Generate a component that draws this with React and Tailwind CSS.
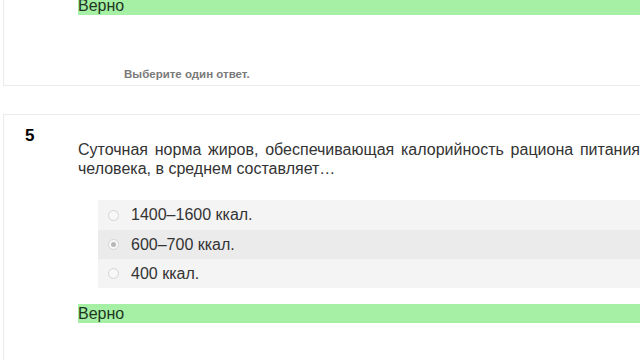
import React from 'react';

const options = [
  { text: '1400–1600 ккал.', checked: false },
  { text: '600–700 ккал.', checked: true },
  { text: '400 ккал.', checked: false },
];

const Radio = ({ checked }) => (
  <span className="w-[11px] h-[11px] rounded-full border border-[#d4d4d4] bg-[#f8f8f8] flex items-center justify-center">
    {checked && <span className="w-[5px] h-[5px] rounded-full bg-[#b8b8b8]" />}
  </span>
);

const App = () => {
  return (
    <div
      className="w-[640px] h-[360px] overflow-hidden bg-white pl-[3px] text-[#333]"
      style={{ fontFamily: '"Liberation Sans", Arial, sans-serif' }}
    >
      {/* Previous question (tail) */}
      <div className="w-[700px] h-[89px] -mt-[3px] border-l border-b border-[#ebebeb] flex flex-col">
        <div className="ml-[74px] h-[18px] bg-[#a5f0a5] text-[16px] leading-[17px] text-[#1e361e]">Верно</div>
        <div className="ml-[120px] mt-[53px] text-[11.5px] font-bold text-[#7a7a7a] leading-[13px]">
          Выберите один ответ.
        </div>
      </div>

      {/* Question 5 */}
      <div className="w-[700px] h-[260px] mt-[28px] border-l border-t border-[#ebebeb] flex">
        <div className="w-[74px] pl-[21px] pt-[11px] text-[17px] font-bold text-black leading-[20px]">5</div>
        <div className="flex-1 flex flex-col pt-[25px]">
          <div className="w-[562px] text-[16px] leading-[19px] text-[#333]">
            <div className="text-justify [text-align-last:justify]">
              Суточная норма жиров, обеспечивающая калорийность рациона питания
            </div>
            <div>человека, в среднем составляет…</div>
          </div>

          <div className="ml-[20px] mt-[22px] flex flex-col">
            {options.map((o, i) => (
              <div
                key={i}
                className={`flex items-center pl-[10px] ${i === 0 ? 'h-[30px]' : 'h-[29px]'} ${
                  o.checked ? 'bg-[#ebebeb]' : 'bg-[#f4f4f4]'
                }`}
              >
                <Radio checked={o.checked} />
                <span className="ml-[12px] text-[16px] text-[#333]">{o.text}</span>
              </div>
            ))}
          </div>

          <div className="mt-[16px] h-[19px] bg-[#a5f0a5] text-[16px] leading-[19px] text-[#1e361e]">Верно</div>
        </div>
      </div>
    </div>
  );
};

export default App;
